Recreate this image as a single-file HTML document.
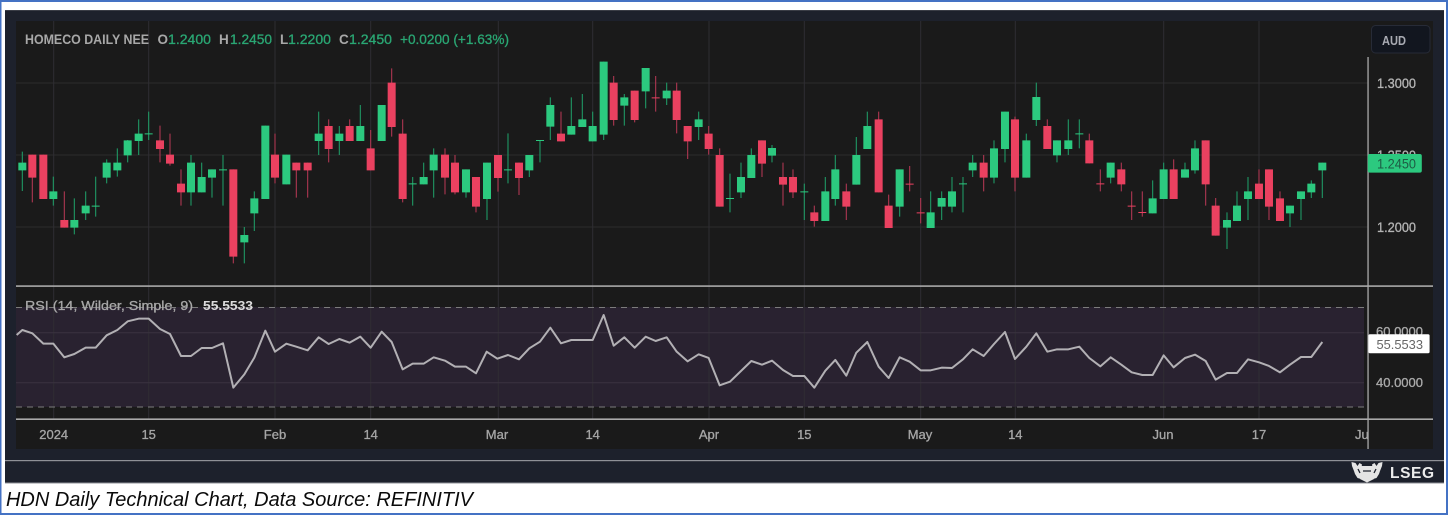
<!DOCTYPE html>
<html lang="en">
<head>
<meta charset="utf-8">
<title>HDN Daily Technical Chart</title>
<style>
html,body{margin:0;padding:0;background:#fff;width:1448px;height:515px;overflow:hidden}
svg{display:block;filter:blur(.35px)}
text{font-family:"Liberation Sans",sans-serif}
.t{stroke-width:.3px}
</style>
</head>
<body>
<svg width="1448" height="515" viewBox="0 0 1448 515" xmlns="http://www.w3.org/2000/svg">
<rect width="1448" height="515" fill="#4472c4"/>
<rect x="1.5" y="2" width="1444.5" height="511" fill="#fff"/>
<rect x="5" y="10" width="1439" height="473.5" fill="#1d212c"/>
<rect x="5" y="10" width="1439" height="1" fill="#3a3d46"/>
<rect x="16" y="21" width="1417" height="428" fill="#1a1a1a"/>
<rect x="16" y="307" width="1348" height="100" fill="#292230"/>
<g stroke="#2c2c2c" stroke-width="1" fill="none">
<path d="M16 83H1368M16 155H1368M16 227H1368"/>
<path d="M53.7 21V419M148.7 21V419M275 21V419M370.7 21V419M498.3 21V419M592.7 21V419M709 21V419M804.3 21V419M920.7 21V419M1015.3 21V419M1163.7 21V419M1259 21V419" stroke="#2f2d33"/>
<path d="M16 332.7H1364M16 382.7H1364" stroke="#3a3340"/>
</g>
<path d="M16 307.5H1364M16 407H1364" stroke="#7c7c7c" stroke-width="1" stroke-dasharray="6 5" fill="none"/>
<g transform="scale(.33333)" fill="none">
<path stroke="#1f9462" stroke-width="3.4" d="M67 455V573M160 530V617M223 595V703M257 574V660M287 530V650M320 478V550M352 445V530M383 420V487M416 358V465M446 335V420M573 465V617M605 488V577M636 508V593M669 465V617M733 681V790M763 574V693M796 377V597M859 464V553M956 335V465M1018 378V465M1081 315V423M1145 315V423M1238 531V617M1271 488V553M1301 445V593M1398 508V593M1461 488V660M1524 400V550M1588 465V531M1620 420V487M1651 292V420M1714 292V404M1747 282V381M1778 335V424M1811 185V420M1873 282V377M1937 204V325M2000 248V315M2096 335V420M2190 521V637M2223 488V594M2254 445V534M2316 435V487M2413 551V660M2476 531V663M2506 465V617M2569 411V554M2602 335V447M2699 508V650M2792 574V684M2825 574V660M2856 531V637M2889 531V637M2918 465V531M2982 421V550M3015 335V487M3079 401V533M3109 248V378M3171 421V487M3205 358V465M3238 358V445M3332 488V550M3458 541V640M3491 488V597M3555 488V533M3585 421V521M3681 637V747M3711 574V663M3744 531V660M3870 617V681M3903 574V660M3934 541V594M3967 488V594"/>
<path stroke="#2cc97f" stroke-width="24" d="M67 488V511M160 574V597M223 660V683M257 617V640M287 617V620M320 488V533M352 488V511M383 421V466M416 401V423M446 400V403M573 488V577M605 531V577M636 508V533M669 508V511M733 705V727M763 595V640M796 377V597M859 464V553M956 401V423M1018 401V423M1081 378V423M1145 315V423M1238 550V553M1271 531V553M1301 464V511M1398 508V577M1461 488V597M1524 508V511M1588 465V511M1620 420V423M1651 315V380M1714 378V404M1747 358V381M1778 378V424M1811 185V404M1873 292V317M1937 204V274M2000 272V295M2096 358V381M2190 594V597M2223 531V577M2254 465V534M2316 444V467M2413 574V577M2476 574V663M2506 508V597M2569 465V554M2602 378V447M2699 508V620M2792 637V684M2825 594V620M2856 574V620M2889 550V553M2918 488V511M2982 445V533M3015 335V447M3079 421V533M3109 291V360M3171 421V466M3205 421V447M3238 400V403M3332 488V533M3458 595V640M3491 508V597M3555 508V533M3585 445V511M3681 660V683M3711 617V663M3744 574V597M3870 617V640M3903 574V597M3934 551V577M3967 488V511"/>
<path stroke="#a93650" stroke-width="3.4" d="M97 464V607M130 464V597M193 574V683M480 377V487M510 401V497M543 508V617M700 508V790M825 401V550M889 488V593M923 488V593M986 358V487M1049 358V423M1112 390V511M1175 205V410M1208 358V607M1335 445V583M1365 465V583M1428 531V637M1494 465V575M1557 488V585M1683 335V424M1841 228V377M1904 272V367M1967 228V335M2030 248V400M2063 378V477M2126 378V464M2159 445V620M2286 421V531M2349 488V617M2379 508V594M2443 617V680M2539 551V660M2636 335V577M2666 584V684M2729 498V574M2762 594V670M2951 465V574M3045 350V574M3142 358V447M3268 401V490M3301 508V574M3364 488V574M3395 574V660M3427 574V650M3521 478V597M3617 421V617M3647 594V707M3777 508V597M3807 508V660M3840 574V663"/>
<path stroke="#ea4160" stroke-width="24" d="M97 464V533M130 464V597M193 660V683M480 421V447M510 464V491M543 551V577M700 508V770M825 464V533M889 488V511M923 488V511M986 378V447M1049 378V423M1112 445V511M1175 248V381M1208 401V597M1335 464V533M1365 488V577M1428 531V620M1494 465V534M1557 488V534M1683 401V424M1841 248V360M1904 272V360M1967 292V295M2030 272V360M2063 378V424M2126 401V447M2159 465V620M2286 421V491M2349 531V554M2379 531V577M2443 637V663M2539 574V620M2636 358V577M2666 617V684M2729 551V554M2762 637V640M2951 488V533M3045 358V533M3142 378V447M3268 421V490M3301 550V553M3364 508V553M3395 617V620M3427 636V639M3521 508V597M3617 421V553M3647 617V707M3777 551V597M3807 508V620M3840 595V663"/>
<path transform="translate(0,840)" stroke="#b2b0b4" stroke-width="6" stroke-linejoin="round" d="M50 165L67 150L97 160L130 191L160 191L193 232L223 222L257 203L287 203L320 166L352 150L383 124L416 116L446 116L480 147L510 162L543 228L573 228L605 204L636 204L669 190L700 323L733 283L763 233L796 152L825 215L859 191L889 200L923 211L956 172L986 192L1018 177L1049 188L1081 170L1112 203L1145 155L1175 186L1208 268L1238 251L1271 251L1301 232L1335 242L1365 260L1398 260L1428 280L1460 215L1492 236L1524 225L1557 238L1588 205L1620 185L1651 143L1683 190L1714 180L1747 180L1778 180L1811 105L1841 197L1873 172L1904 203L1937 170L1967 183L2000 172L2030 215L2063 244L2096 223L2126 234L2159 316L2190 305L2223 273L2254 243L2286 254L2316 242L2349 270L2379 288L2413 288L2443 323L2476 272L2506 240L2539 287L2569 218L2602 186L2636 260L2666 294L2699 232L2729 245L2762 271L2792 271L2825 263L2856 264L2889 238L2918 208L2951 228L2982 192L3015 156L3045 237L3079 200L3109 160L3142 215L3171 208L3205 208L3238 200L3268 234L3301 259L3332 232L3364 254L3395 277L3427 285L3458 285L3491 226L3521 262L3555 234L3585 224L3617 243L3647 299L3681 279L3711 279L3744 238L3777 247L3807 258L3840 277L3870 254L3903 231L3934 231L3967 186"/>
</g>
<rect x="16" y="285.3" width="1417" height="1.6" fill="#a9a9a9"/>
<rect x="16" y="418.4" width="1417" height="1.6" fill="#a9a9a9"/>
<rect x="1367.4" y="57" width="1.3" height="392" fill="#a9a9a9"/>
<rect x="5" y="460" width="1439" height="1.2" fill="#8f9197"/>
<rect x="5" y="482.5" width="1439" height="1" fill="#8f9197"/>
<g font-size="13.5" fill="#b4b4b4">
<text x="25" y="44" textLength="124" lengthAdjust="spacingAndGlyphs" font-weight="bold" fill="#a8a8a8">HOMECO DAILY NEE</text>
<text x="157.5" y="44" font-weight="bold" fill="#a8a8a8">O</text>
<text x="219" y="44" font-weight="bold" fill="#a8a8a8">H</text>
<text x="280" y="44" font-weight="bold" fill="#a8a8a8">L</text>
<text x="339" y="44" font-weight="bold" fill="#a8a8a8">C</text>
<g fill="#2aa673" stroke="#2aa673" class="t">
<text x="168" y="44" textLength="43" lengthAdjust="spacingAndGlyphs">1.2400</text>
<text x="230" y="44" textLength="42" lengthAdjust="spacingAndGlyphs">1.2450</text>
<text x="288" y="44" textLength="43" lengthAdjust="spacingAndGlyphs">1.2200</text>
<text x="349" y="44" textLength="43" lengthAdjust="spacingAndGlyphs">1.2450</text>
<text x="400" y="44" textLength="109" lengthAdjust="spacingAndGlyphs">+0.0200 (+1.63%)</text>
</g>
<g stroke="#b4b4b4" class="t">
<text x="1377" y="88" textLength="39" lengthAdjust="spacingAndGlyphs">1.3000</text>
<text x="1377" y="160" textLength="39" lengthAdjust="spacingAndGlyphs">1.2500</text>
<text x="1377" y="232" textLength="39" lengthAdjust="spacingAndGlyphs">1.2000</text>
</g>
</g>
<rect x="1367.8" y="154" width="54" height="18.6" rx="2" fill="#2cc97f"/>
<text x="1377" y="168.5" font-size="13.5" textLength="39" lengthAdjust="spacingAndGlyphs" fill="#1e5b44">1.2450</text>
<rect x="1371.5" y="25.5" width="58.5" height="27.5" rx="4" fill="#12161f" stroke="#272b37"/>
<text x="1382" y="45" font-size="13" font-weight="bold" textLength="24" lengthAdjust="spacingAndGlyphs" fill="#a9abb3">AUD</text>
<text x="25" y="310" font-size="13" textLength="168" lengthAdjust="spacingAndGlyphs" fill="#a8a8a8" stroke="#a8a8a8" class="t">RSI (14, Wilder, Simple, 9)</text>
<text x="203" y="310" font-size="13" font-weight="bold" textLength="50" lengthAdjust="spacingAndGlyphs" fill="#dcdcdc">55.5533</text>
<g font-size="13" fill="#ababab" stroke="#ababab" class="t">
<text x="1376" y="336" textLength="47" lengthAdjust="spacingAndGlyphs">60.0000</text>
<text x="1376" y="387" textLength="47" lengthAdjust="spacingAndGlyphs">40.0000</text>
</g>
<rect x="1368.4" y="334.3" width="61.2" height="19" rx="1.5" fill="#fff"/>
<text x="1376.5" y="349" font-size="13" textLength="46.5" lengthAdjust="spacingAndGlyphs" fill="#666">55.5533</text>
<g font-size="13" fill="#a6a6a6" stroke="#a6a6a6" class="t" text-anchor="middle">
<text x="53.7" y="439">2024</text>
<text x="148.7" y="439">15</text>
<text x="275" y="439">Feb</text>
<text x="370.7" y="439">14</text>
<text x="497" y="439">Mar</text>
<text x="592.7" y="439">14</text>
<text x="709" y="439">Apr</text>
<text x="804.3" y="439">15</text>
<text x="920" y="439">May</text>
<text x="1015.3" y="439">14</text>
<text x="1163" y="439">Jun</text>
<text x="1259" y="439">17</text>
</g>
<text x="1355" y="439" font-size="13" fill="#a6a6a6" stroke="#a6a6a6" class="t">Ju</text>
<g fill="#e4e4e4">
<path d="M1351.5 462l4 1 2 3 2-3 2.500 1.500-1 5.500 2 5-2 4-3.500-1-2.500-4-1-3-2-5z"/>
<path d="M1382.500 462l-4 1-2 3-2-3-2.500 1.500 1 5.500-2 5 2 4 3.500-1 2.500-4 1-3 2-5z"/>
<path d="M1361 466h12l1 4-2 5 2 4-7 3.500-7-3.500 2-4-2-5z"/>
</g>
<path d="M1358 469l2 4M1376 469l-2 4M1363 471h8" stroke="#1d212c" stroke-width="1.300" fill="none"/>
<text x="1390" y="478" font-size="15.500" font-weight="bold" textLength="44" fill="#ececec">LSEG</text>
<text x="6" y="506" font-size="20.500" font-style="italic" textLength="467" lengthAdjust="spacingAndGlyphs" fill="#0a0a0a">HDN Daily Technical Chart, Data Source: REFINITIV</text>
</svg>
</body>
</html>
